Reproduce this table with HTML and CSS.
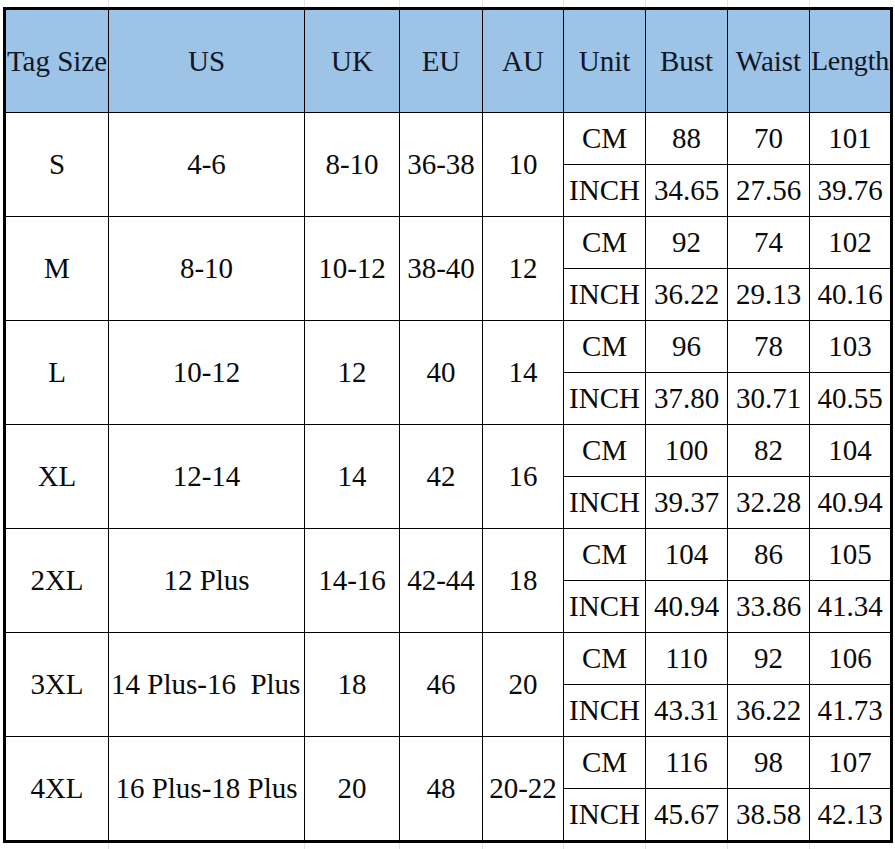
FILE: index.html
```html
<!DOCTYPE html>
<html>
<head>
<meta charset="utf-8">
<link rel="stylesheet" href="styles.css">
<title>Size Chart</title>
</head>
<body>
<div class="sheet">
  <div class="strip strip-top"><span class="g1"></span><span class="g2"></span><span class="g3"></span><span class="g4"></span><span class="g5"></span><span class="g6"></span><span class="g7"></span><span class="g8"></span><span class="g9"></span></div>
  <table class="chart">
    <colgroup>
      <col class="c1"><col class="c2"><col class="c3"><col class="c4"><col class="c5"><col class="c6"><col class="c7"><col class="c8"><col class="c9">
    </colgroup>
    <thead>
      <tr>
        <th>Tag Size</th><th>US</th><th>UK</th><th>EU</th><th>AU</th><th>Unit</th><th>Bust</th><th>Waist</th><th class="last tight">Length</th>
      </tr>
    </thead>
    <tbody>
      <tr><td rowspan="2" class="big">S</td><td rowspan="2" class="big">4-6</td><td rowspan="2" class="big">8-10</td><td rowspan="2" class="big">36-38</td><td rowspan="2" class="big">10</td><td>CM</td><td>88</td><td>70</td><td class="last">101</td></tr>
      <tr><td>INCH</td><td>34.65</td><td>27.56</td><td class="last">39.76</td></tr>

      <tr><td rowspan="2" class="big">M</td><td rowspan="2" class="big">8-10</td><td rowspan="2" class="big">10-12</td><td rowspan="2" class="big">38-40</td><td rowspan="2" class="big">12</td><td>CM</td><td>92</td><td>74</td><td class="last">102</td></tr>
      <tr><td>INCH</td><td>36.22</td><td>29.13</td><td class="last">40.16</td></tr>

      <tr><td rowspan="2" class="big">L</td><td rowspan="2" class="big">10-12</td><td rowspan="2" class="big">12</td><td rowspan="2" class="big">40</td><td rowspan="2" class="big">14</td><td>CM</td><td>96</td><td>78</td><td class="last">103</td></tr>
      <tr><td>INCH</td><td>37.80</td><td>30.71</td><td class="last">40.55</td></tr>

      <tr><td rowspan="2" class="big">XL</td><td rowspan="2" class="big">12-14</td><td rowspan="2" class="big">14</td><td rowspan="2" class="big">42</td><td rowspan="2" class="big">16</td><td>CM</td><td>100</td><td>82</td><td class="last">104</td></tr>
      <tr><td>INCH</td><td>39.37</td><td>32.28</td><td class="last">40.94</td></tr>

      <tr><td rowspan="2" class="big">2XL</td><td rowspan="2" class="big">12 Plus</td><td rowspan="2" class="big">14-16</td><td rowspan="2" class="big">42-44</td><td rowspan="2" class="big">18</td><td>CM</td><td>104</td><td>86</td><td class="last">105</td></tr>
      <tr><td>INCH</td><td>40.94</td><td>33.86</td><td class="last">41.34</td></tr>

      <tr><td rowspan="2" class="big">3XL</td><td rowspan="2" class="big pre">14 Plus-16  Plus</td><td rowspan="2" class="big">18</td><td rowspan="2" class="big">46</td><td rowspan="2" class="big">20</td><td>CM</td><td>110</td><td>92</td><td class="last">106</td></tr>
      <tr><td>INCH</td><td>43.31</td><td>36.22</td><td class="last">41.73</td></tr>

      <tr class="final-top"><td rowspan="2" class="big end">4XL</td><td rowspan="2" class="big end">16 Plus-18 Plus</td><td rowspan="2" class="big end">20</td><td rowspan="2" class="big end">48</td><td rowspan="2" class="big end">20-22</td><td>CM</td><td>116</td><td>98</td><td class="last">107</td></tr>
      <tr class="final-bottom"><td class="end">INCH</td><td class="end">45.67</td><td class="end">38.58</td><td class="last end">42.13</td></tr>
    </tbody>
  </table>
  <div class="strip strip-bottom"><span class="g1"></span><span class="g2"></span><span class="g3"></span><span class="g4"></span><span class="g5"></span><span class="g6"></span><span class="g7"></span><span class="g8"></span><span class="g9"></span></div>
</div>
</body>
</html>
```

FILE: styles.css
```css
html, body {
  margin: 0;
  padding: 0;
  background: #ffffff;
}

.sheet {
  padding-left: 3px;
  font-family: "Liberation Serif", "Times New Roman", serif;
  color: #0a0a0a;
}

.strip {
  display: flex;
  height: 7px;
}
.strip-bottom {
  height: 8px;
}
.strip span {
  box-sizing: border-box;
  border-right: 1px solid #e2e2e2;
  flex: none;
}
.strip .g1 { width: 106px; }
.strip .g2 { width: 196px; }
.strip .g3 { width: 95px; }
.strip .g4 { width: 83px; }
.strip .g5 { width: 81px; }
.strip .g6 { width: 82px; }
.strip .g7 { width: 82px; }
.strip .g8 { width: 82px; }
.strip .g9 { width: 83px; border-right: none; }

.chart {
  border-collapse: separate;
  border-spacing: 0;
  table-layout: fixed;
  width: 890px;
  border: 3px solid #000;
  font-size: 29px;
}

.chart .c1 { width: 103px; }
.chart .c2 { width: 196px; }
.chart .c3 { width: 95px; }
.chart .c4 { width: 83px; }
.chart .c5 { width: 81px; }
.chart .c6 { width: 82px; }
.chart .c7 { width: 82px; }
.chart .c8 { width: 82px; }
.chart .c9 { width: 80px; }

.chart th,
.chart td {
  box-sizing: border-box;
  padding: 0;
  text-align: center;
  vertical-align: middle;
  white-space: nowrap;
  overflow: hidden;
  border-right: 1px solid #000;
  border-bottom: 1px solid #000;
  font-weight: normal;
  line-height: 1;
}

.chart th {
  height: 103px;
  background: #9dc3e6;
  color: #0f1626;
}

.chart th.tight {
  font-size: 28px;
  letter-spacing: -0.2px;
}

.chart td {
  height: 52px;
}

.chart td.big {
  height: 104px;
}

.chart .last {
  border-right: none;
}

.chart td.end {
  border-bottom: none;
  height: 51px;
}

.chart td.big.end {
  height: 103px;
}

.chart td.pre {
  white-space: pre;
  text-align: left;
  padding-left: 2px;
}
```
